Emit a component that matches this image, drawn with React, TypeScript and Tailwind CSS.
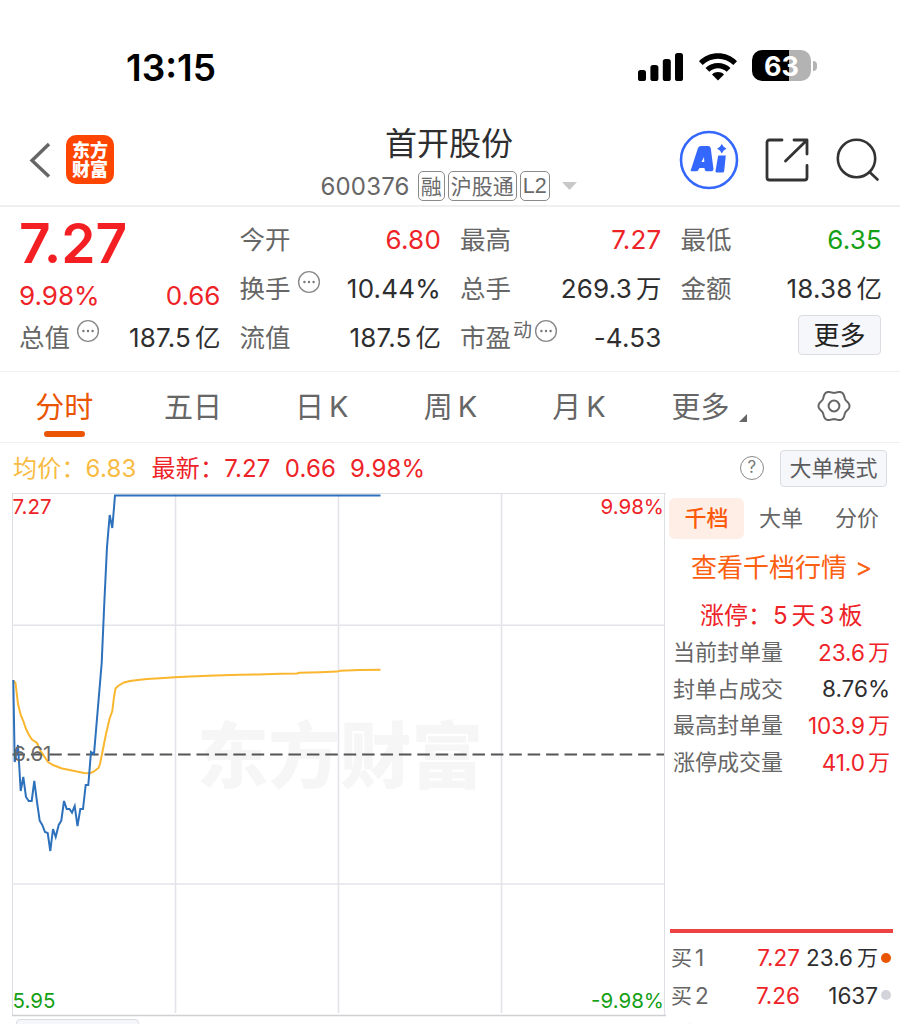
import { clsx } from "clsx";
import type { ReactNode } from "react";

const UP = "text-[#ee2328]";
const DOWN = "text-[#15a015]";
const DARK = "text-[#2e2e30]";

const TABS = ["分时", "五日", "日K", "周K", "月K"];

const PRICE_POINTS =
  "13.3,680 14.7,762 18,745 20.7,791 23.3,777 26,797 28.7,801 31.7,801 34.3,781 37,802 39.7,820.7 42.3,825 45,832 47.7,833 50.3,851 53,829 55.7,837 58.7,825 61.3,820.7 64,801 66.7,809 69.5,809 72,812.7 74.7,806 77.5,826 80.3,809 83,809 85.7,785 88.3,785 91,752 94,754 101.7,663 104.3,603 107,547 109.7,515 112.3,528 115,495.4 380.5,495.4";

const AVG_POINTS =
  "13.3,680.5 15.5,683 18,704 20.7,715 23.3,721 26,729 29,735 32,739.5 37,743 40,750 44,756 48,762 53,765 62,768.5 72,770.5 84,773 90,773.2 94,771.5 98.5,768 100,764 102,754 106,734 109.5,719 112.3,711 114,697 115.5,688.5 118,686 124,682.5 130,681 138,680 147,679 160,678.3 175,677.3 190,676.6 215,675.6 240,674.8 258,674.4 280,673.8 297,673.5 299,672.7 320,672.2 337,671.6 340,670.8 360,670 380.5,669.8";

// six soft lobes around the centre of a 36px box
const GEAR_POINTS = Array.from({ length: 120 }, (_, i) => {
  const a = (i / 120) * Math.PI * 2;
  const r = 14.3 + 1.2 * Math.cos(6 * a);
  return `${(18 + r * Math.cos(a)).toFixed(2)},${(18 + r * Math.sin(a)).toFixed(2)}`;
}).join(" ");

const DETAILS = [
  { label: "当前封单量", value: "23.6", unit: "万", color: UP },
  { label: "封单占成交", value: "8.76%", unit: "", color: DARK },
  { label: "最高封单量", value: "103.9", unit: "万", color: UP },
  { label: "涨停成交量", value: "41.0", unit: "万", color: UP },
];

const BIDS = [
  { no: 1, price: "7.27", volume: "23.6", unit: "万", dot: "bg-[#ea5504]" },
  { no: 2, price: "7.26", volume: "1637", unit: "", dot: "bg-[#d3d3dc]" },
  { no: 3, price: "7.25", volume: "1221", unit: "", dot: "bg-white" },
];

const MoreDots = () => (
  <svg className="mb-3.5 size-6 shrink-0" viewBox="0 0 24 24" fill="none">
    <circle cx="12" cy="12" r="10.4" stroke="#8a8a8a" strokeWidth="1.4" />
    <circle cx="7.4" cy="12" r="1.2" fill="#777" />
    <circle cx="12" cy="12" r="1.2" fill="#777" />
    <circle cx="16.6" cy="12" r="1.2" fill="#777" />
  </svg>
);

type StatProps = {
  label: ReactNode;
  value: string;
  unit?: string;
  color?: string;
};

const Stat = ({ label, value, unit, color = DARK }: StatProps) => (
  <div className="flex h-[49px] items-center justify-between">
    <span className="-ml-px flex items-center gap-[6px] pt-px text-[25.5px] text-[#666]">{label}</span>
    <span className={clsx("flex items-center text-[26px] tracking-[0.2px]", color)}>
      {value}
      {unit && <span className="ml-[4px] pt-px text-[25.5px] tracking-normal">{unit}</span>}
    </span>
  </div>
);

const StatusBar = () => (
  <div className="flex h-[120px] items-start justify-between pt-[44px] pr-[83px] pl-[126px]">
    <span className="text-[37px] leading-[47px] font-semibold text-black">13:15</span>
    <div className="flex items-center pt-[6px]">
      <svg className="h-[30px] w-[46px]" viewBox="0 0 46 30">
        <rect x="0" y="19" width="8" height="11" rx="2.6" />
        <rect x="12.4" y="14" width="8" height="16" rx="2.6" />
        <rect x="24.8" y="8" width="8" height="22" rx="2.6" />
        <rect x="37" y="2" width="8" height="28" rx="2.6" />
      </svg>
      <svg className="ml-[14px] h-[30px] w-[40px]" viewBox="0 0 40 30">
        <path d="M1 10.2C11.5-.4 28.5-.4 39 10.2L35.3 14C26.7 5.6 13.3 5.6 4.7 14Z" />
        <path d="M7.5 17C14.5 10.2 25.5 10.2 32.5 17L28.7 20.8C23.8 16 16.2 16 11.3 20.8Z" />
        <path d="M14 23.5C17.5 20.3 22.5 20.3 26 23.5L20 29.5Z" />
      </svg>
      <div className="ml-[14px] flex h-[31px] w-[59px] items-center justify-center rounded-[10px] bg-[linear-gradient(90deg,#000_63%,#b3b3b3_63%)] pt-0.5 text-[27px] leading-[29px] font-bold text-white">
        63
      </div>
      <div className="ml-[2px] h-[10px] w-[4px] rounded-r-full bg-[#b3b3b3]" />
    </div>
  </div>
);

const Tag = ({ children }: { children: ReactNode }) => (
  <span className="flex h-[30px] items-center rounded-[5px] border-[1.5px] border-[#8a8a8a] px-[2px] pt-px text-[21px] text-[#6a6a6a]">
    {children}
  </span>
);

const Header = () => (
  <header className="flex h-[87px] items-start border-b-2 border-[#efefef]">
    <div className="flex w-[320px] items-center pt-[15px] pl-[29px]">
      <svg className="h-[36px] w-[22px]" viewBox="0 0 22 36" fill="none" stroke="#666" strokeWidth="3.4">
        <path d="M20 2L3 18.5L20 34.5" />
      </svg>
      <div className="ml-[15px] flex h-[49px] w-[48px] flex-col items-center justify-center rounded-[10px] bg-[#fe4502] pt-px text-[18px] leading-[19.5px] font-black text-white">
        <span>东方</span>
        <span>财富</span>
      </div>
    </div>
    <div className="flex w-[258px] flex-col items-center pt-px">
      <h1 className="h-[47px] text-[32px] leading-[46px] text-[#2e2e30]">首开股份</h1>
      <div className="-ml-px flex h-[36px] items-center gap-[3px]">
        <span className="mr-[5px] pt-px text-[24px] tracking-[0.2px] text-[#666]">600376</span>
        <Tag>融</Tag>
        <Tag>沪股通</Tag>
        <Tag>
          <span className="font-['Liberation_Sans',sans-serif] text-[21.5px]">L2</span>
        </Tag>
        <svg className="ml-[9px] h-[8px] w-[15px]" viewBox="0 0 15 8">
          <path d="M0 0H15L7.5 8Z" fill="#c8c8c8" />
        </svg>
      </div>
    </div>
    <div className="flex items-center pt-[10px] pl-[101px]">
      <svg className="size-[60px]" viewBox="0 0 60 60" fill="#3467fb">
        <circle cx="30" cy="30" r="28" fill="none" stroke="#3467fb" strokeWidth="2.6" />
        <path
          fillRule="evenodd"
          d="M11.5 41L19 18Q19.800 16 22 16H29Q31.300 16 31.700 18L34.500 39Q34.500 41.300 32.500 41.300H27.500Q26 41.300 25.700 39.500L25.500 38H20.500L19.500 39.800Q18.800 41.300 17 41.300H13Q11.200 41.300 11.500 40ZM22.500 32H25.300L25 27Z"
        />
        <path d="M39.2 25.5H46.800L45.200 41Q45 42.500 43.400 42.500H37.800Q36.300 42.500 36.500 41Z" />
        <path d="M42.8 14L44.7 16.800L47.500 18.700L44.700 20.600L42.800 23.400L40.900 20.600L38.100 18.700L40.900 16.800Z" />
      </svg>
      <svg className="ml-[26px] size-[44px]" viewBox="0 0 44 44" fill="none" stroke="#333" strokeWidth="2.8" strokeLinecap="round" strokeLinejoin="round">
        <path d="M17 2H4.5Q2 2 2 4.500V39.500Q2 42 4.500 42H39.500Q42 42 42 39.500V27.500" />
        <path d="M29 2H42V16M41 3L20.5 23" />
      </svg>
      <svg className="ml-[26px] size-[46px]" viewBox="0 0 46 46" fill="none" stroke="#333" strokeWidth="2.6" strokeLinecap="round">
        <circle cx="21.5" cy="21.5" r="18.7" />
        <path d="M34.5 35L42.5 42.5" />
      </svg>
    </div>
  </header>
);

const Quote = () => (
  <section className="grid h-[165px] grid-cols-4 gap-x-5 border-b border-[#f1f1f1] pt-2 pr-[18px] pl-5">
    <div>
      <div className="-ml-px flex h-[56px] items-center text-[55px] font-semibold text-[#f41f23]">7.27</div>
      <div className={clsx("-ml-px flex h-[49px] items-center justify-between text-[26px]", UP)}>
        <span>9.98%</span>
        <span>0.66</span>
      </div>
      <div className="-mt-[7px]">
        <Stat label={<>总值<MoreDots /></>} value="187.5" unit="亿" />
      </div>
    </div>
    <div>
      <Stat label="今开" value="6.80" color={UP} />
      <Stat label={<>换手<MoreDots /></>} value="10.44%" />
      <Stat label="流值" value="187.5" unit="亿" />
    </div>
    <div>
      <Stat label="最高" value="7.27" color={UP} />
      <Stat label="总手" value="269.3" unit="万" />
      <Stat
        label={
          <span className="flex items-center">
            市盈
            <span className="mr-[2px] mb-3.5 ml-[2px] text-[19px]">动</span>
            <MoreDots />
          </span>
        }
        value="-4.53"
      />
    </div>
    <div>
      <Stat label="最低" value="6.35" color={DOWN} />
      <Stat label="金额" value="18.38" unit="亿" />
      <div className="mt-[2px] mr-px ml-auto flex h-[40px] w-[83px] items-center justify-center rounded-[4px] border border-[#dcdde2] bg-[#f6f7fa] pt-px text-[26px] text-[#222]">
        更多
      </div>
    </div>
  </section>
);

const Tabs = () => (
  <nav className="flex h-[71px] border-b border-[#eeeff1] text-[29px] text-[#666]">
    {TABS.map((tab, i) => (
      <div key={tab} className={clsx("flex w-[128.7px] flex-col items-center pt-[13px]", i === 0 && "text-[#ea5504]")}>
        <span className="flex h-[44px] items-center gap-[5px] pt-0.5">
          {tab.endsWith("K") ? (
            <>
              {tab[0]}
              <span className="pb-0.5">K</span>
            </>
          ) : (
            tab
          )}
        </span>
        {i === 0 && <span className="mt-[2px] h-[6px] w-[41px] rounded-full bg-[#ea5504]" />}
      </div>
    ))}
    <div className="flex h-[70px] w-[135px] items-center pl-[28px]">
      <span className="pt-0.5">更多</span>
      <svg className="mt-[22px] ml-[10px] size-[8px]" viewBox="0 0 8 8">
        <path d="M8 0V8H0Z" fill="#666" />
      </svg>
    </div>
    <svg className="mt-[16px] ml-[38px] size-[36px]" viewBox="0 0 36 36" fill="none" stroke="#666" strokeWidth="2">
      <polygon points={GEAR_POINTS} />
      <circle cx="18" cy="18" r="5.4" />
    </svg>
  </nav>
);

const ChartInfo = () => (
  <div className="flex h-[50px] items-center pt-px pr-[13px] pl-[13px] text-[24px] tracking-[0.2px]">
    <span className="pt-px text-[#f8bb43]">均价：</span>
    <span className="text-[#f8bb43]">6.83</span>
    <span className={clsx("ml-[15px] pt-px", UP)}>最新：</span>
    <span className={UP}>7.27</span>
    <span className={clsx("ml-[14px]", UP)}>0.66</span>
    <span className={clsx("ml-[14px]", UP)}>9.98%</span>
    <span className="mb-px ml-auto flex size-6 items-center justify-center rounded-full border-[1.5px] border-[#8a8a8a] text-[17px] text-[#777]">?</span>
    <span className="mb-px ml-[16px] flex h-[37px] w-[107px] items-center justify-center rounded-[4px] border border-[#dcdde2] bg-[#f6f7fa] pt-px text-[22px] tracking-normal text-[#5c5c5f]">
      大单模式
    </span>
  </div>
);

const Chart = () => (
  <svg className="h-[524px] w-[654px]" viewBox="12 493 654 524" fontSize="20.5">
    <text x="197" y="782" fontSize="71.5" fontWeight="900" fill="#f6f6f6">东方财富</text>
    <g stroke="#e3e3ea" strokeWidth="1.6">
      <path d="M12 493.5H666M12.5 493V1016M664.5 493V1016" stroke="#dedfe4" strokeWidth="1" />
      <path d="M12 625.2H664M12 884H664M175.5 494V1013M338.5 494V1013M501.5 494V1013" />
      <path d="M12 1015.5H666" stroke="#cfd0d4" />
    </g>
    <path d="M12.5 754.5H664" stroke="#555" strokeWidth="1.8" strokeDasharray="12.5 5.9" />
    <polyline points={AVG_POINTS} fill="none" stroke="#fbb62f" strokeWidth="2" />
    <polyline points={PRICE_POINTS} fill="none" stroke="#2d71bd" strokeWidth="2" />
    <text x="13" y="760.5" fill="#666">6.61</text>
    <text x="12.5" y="514" fill="#ee2328">7.27</text>
    <text x="664" y="514" textAnchor="end" fill="#ee2328">9.98%</text>
    <text x="12.5" y="1008" fill="#15a015">5.95</text>
    <text x="664" y="1008" textAnchor="end" fill="#15a015">-9.98%</text>
  </svg>
);

const OrderBook = () => (
  <aside className="w-[223px] shrink-0">
    <div className="flex h-[50px] items-center text-[22px] text-[#666]">
      <span className="-ml-px flex h-[41px] w-[75px] items-center justify-center rounded-[6px] bg-[#ffeee5] pt-px font-medium text-[#fc5a0a]">
        千档
      </span>
      <span className="ml-[15px] pt-px">大单</span>
      <span className="ml-[32px] pt-px">分价</span>
    </div>
    <div className="flex h-[48px] items-center pl-[21px] text-[26px] text-[#fc6011]">
      <span>查看千档行情</span>
      <span className="ml-[8px]">&gt;</span>
    </div>
    <div className={clsx("flex h-[43px] items-center pt-[6px] pl-[30px] text-[24px]", UP)}>
      涨停：<span className="ml-[1px]">5</span>
      <span className="mx-[4px]">天</span>3<span className="ml-[4px]">板</span>
    </div>
    {DETAILS.map((row) => (
      <div key={row.label} className="flex h-[36.8px] items-center justify-between pr-[3px] pl-[3px]">
        <span className="text-[22px] text-[#666]">{row.label}</span>
        <span className={clsx("flex items-center text-[22.5px]", row.color)}>
          {row.value}
          {row.unit && <span className="ml-[3px] text-[22px]">{row.unit}</span>}
        </span>
      </div>
    ))}
    <div className="mt-[148px] mb-[6px] h-1 bg-[#ee4343]" />
    {BIDS.map((bid) => (
      <div key={bid.no} className="flex h-[37.5px] items-center text-[22.5px]">
        <span className="flex w-[60px] items-center text-[#666]">
          <span className="mr-[3px] ml-px text-[21px]">买</span>
          {bid.no}
        </span>
        <span className={clsx("w-[70px] text-right", UP)}>{bid.price}</span>
        <span className={clsx("flex w-[78px] items-center justify-end", DARK)}>
          {bid.volume}
          {bid.unit && <span className="ml-[4px] text-[21px]">{bid.unit}</span>}
        </span>
        <span className={clsx("ml-[3px] size-[10px] rounded-full", bid.dot)} />
      </div>
    ))}
  </aside>
);

export default function App() {
  return (
    <div className="h-[1024px] w-[900px] overflow-hidden bg-white font-['Inter','Noto_Sans_CJK_SC',sans-serif] whitespace-nowrap">
      <StatusBar />
      <Header />
      <Quote />
      <Tabs />
      <ChartInfo />
      <div className="flex items-start gap-[4px] pl-[12px]">
        <div className="flex flex-col">
          <Chart />
          <div className="mt-[2px] ml-[4px] h-[36px] w-[123px] rounded-[4px] border border-[#dcdde2] bg-[#f6f7fa]" />
        </div>
        <OrderBook />
      </div>
    </div>
  );
}
